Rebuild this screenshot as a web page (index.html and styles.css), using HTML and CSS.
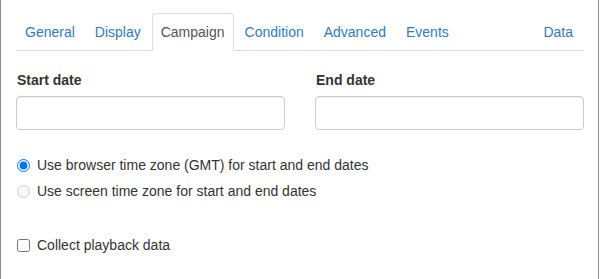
FILE: index.html
```html
<!DOCTYPE html>
<html>
<head>
<meta charset="utf-8">
<link rel="stylesheet" href="styles.css">
</head>
<body>
<div class="frame">
  <ul class="tabs">
    <li class="tab"><a>General</a></li>
    <li class="tab"><a>Display</a></li>
    <li class="tab active"><a>Campaign</a></li>
    <li class="tab"><a>Condition</a></li>
    <li class="tab"><a>Advanced</a></li>
    <li class="tab"><a>Events</a></li>
    <li class="tab tab-right"><a>Data</a></li>
  </ul>
  <div class="content">
    <div class="dates">
      <div class="field">
        <label class="field-label">Start date</label>
        <input class="field-input" type="text">
      </div>
      <div class="field">
        <label class="field-label">End date</label>
        <input class="field-input" type="text">
      </div>
    </div>
    <div class="options">
      <label class="option"><input type="radio" name="tz" checked> Use browser time zone (GMT) for start and end dates</label>
      <label class="option"><input type="radio" name="tz" disabled> Use screen time zone for start and end dates</label>
    </div>
    <label class="option check"><input type="checkbox"> Collect playback data</label>
  </div>
</div>
</body>
</html>
```

FILE: styles.css
```css
* { box-sizing: border-box; }
html, body { margin: 0; padding: 0; background: #fff; }
body {
  font-family: "Liberation Sans", Arial, sans-serif;
  font-size: 14px;
  line-height: 20px;
  color: #333;
}
.frame {
  width: 599px;
  height: 279px;
  border-left: 1px solid #8c8c8c;
  border-right: 1px solid #8c8c8c;
  padding: 13px 14px 0 15px;
}
.tabs {
  list-style: none;
  margin: 0;
  padding: 0;
  display: flex;
  border-bottom: 1px solid #ddd;
}
.tab {
  margin-bottom: -1px;
  margin-right: 2px;
}
.tab a {
  display: block;
  padding: 8px 8px;
  line-height: 20px;
  border: 1px solid transparent;
  border-radius: 4px 4px 0 0;
  color: #337ab7;
}
.tab.active a {
  color: #555;
  background: #fff;
  border-color: #ddd;
  border-bottom-color: transparent;
}
.tab-right { margin-left: auto; }
.content { padding-top: 19px; }
.dates {
  display: grid;
  grid-template-columns: 269px 269px;
  column-gap: 30px;
}
.field { display: flex; flex-direction: column; }
.field-label {
  font-weight: bold;
  margin-bottom: 6px;
  padding-left: 1px;
}
.field-input {
  height: 34px;
  width: 100%;
  border: 1px solid #ccc;
  border-radius: 4px;
  box-shadow: inset 0 1px 1px rgba(0,0,0,.075);
  font: inherit;
  padding: 6px 12px;
  margin: 0;
}
.options {
  margin-top: 25px;
  display: flex;
  flex-direction: column;
  gap: 6px;
}
.option {
  display: flex;
  align-items: center;
  gap: 0;
}
.option input {
  margin: 0 7px 0 1px;
  width: 13px;
  height: 13px;
}
.check { margin-top: 34px; }
```
